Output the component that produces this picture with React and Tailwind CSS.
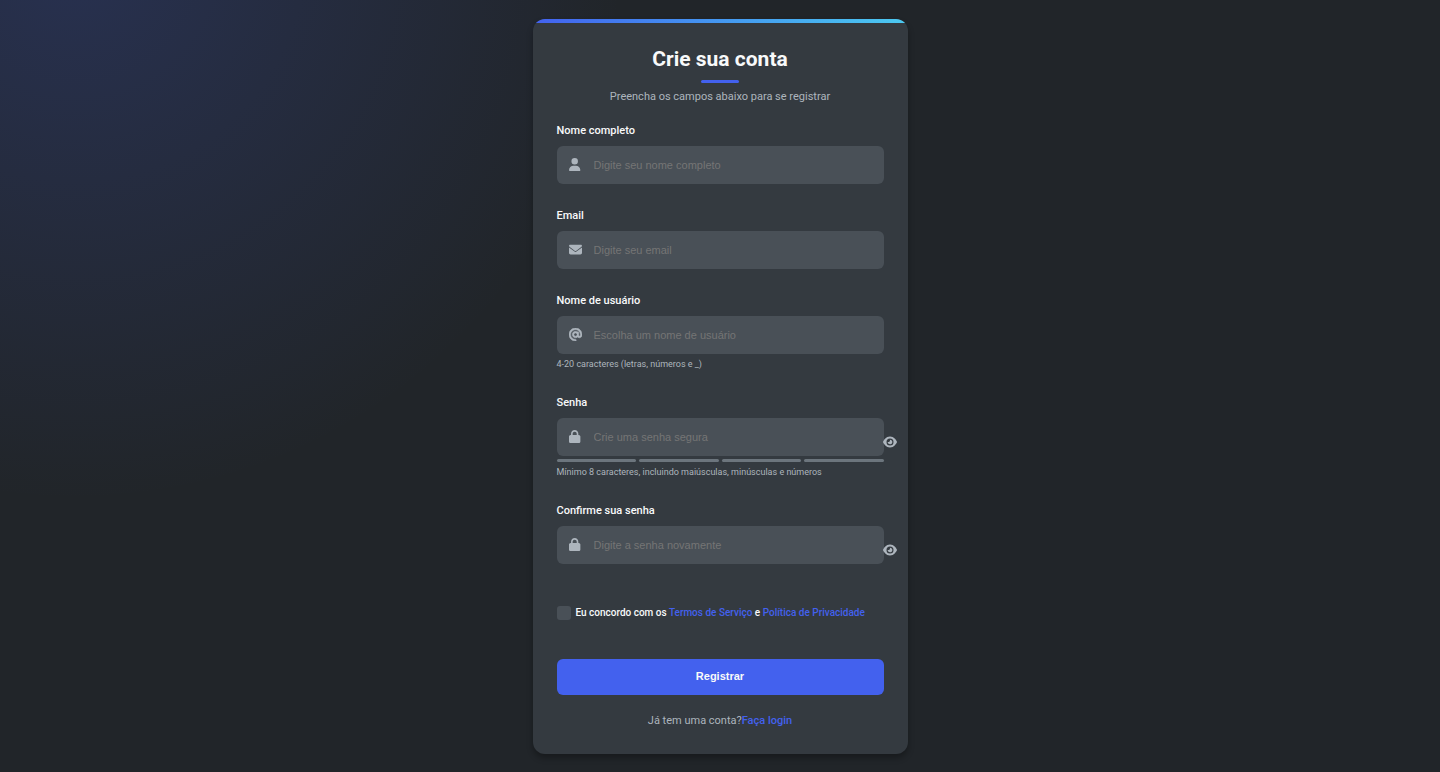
import { FaUser, FaEnvelope, FaAt, FaLock, FaEye } from "react-icons/fa6";

function BoldAt(props) {
  return <FaAt {...props} strokeWidth="20" />;
}

function Field({ id, label, icon: Icon, type = "text", placeholder, children }) {
  const isPassword = type === "password";
  return (
    <div className="flex flex-col">
      <label htmlFor={id} className="mb-[7px] text-[11px] leading-4 font-medium text-[#f8f9fa]">
        {label}
      </label>
      <div className="relative">
        <Icon
          aria-hidden="true"
          preserveAspectRatio="xMinYMid"
          className="pointer-events-none absolute top-3 left-3 size-[13px] text-[#adb5bd]"
        />
        <input
          id={id}
          type={type}
          placeholder={placeholder}
          className="block h-[38px] w-full rounded-md bg-[#495057] pr-3 pl-[37px] font-['Liberation_Sans',Arial,sans-serif] text-[11px] text-[#f8f9fa] outline-none placeholder:text-[#757575] focus:ring-2 focus:ring-[#4361ee]"
        />
        {isPassword && (
          <button type="button" aria-label="Mostrar senha" className="absolute top-[17px] -right-[13px] text-[#adb5bd]">
            <FaEye aria-hidden="true" className="size-3.5" />
          </button>
        )}
      </div>
      {children}
    </div>
  );
}

function Hint({ children }) {
  return <p className="mt-[3px] text-[9px] leading-[14px] text-[#adb5bd]">{children}</p>;
}

export default function App() {
  return (
    <main className="flex min-h-screen items-center justify-center bg-[#212529] bg-[radial-gradient(circle_550px_at_75px_-48px,rgba(67,97,238,0.2),transparent)] px-4 py-4 font-[Roboto,sans-serif]">
      <section className="relative w-full max-w-[375px] overflow-hidden rounded-xl bg-[#343a40] shadow-[0_4px_6px_rgba(0,0,0,0.3)]">
        <div className="h-1 bg-linear-to-r from-[#4361ee] to-[#4cc9f0]" />
        <div className="px-6 pt-[21px] pb-[25px]">
          <header className="mb-[18px] flex flex-col items-center">
            <h1 className="text-[21px] leading-[30px] font-bold text-[#f8f9fa]">Crie sua conta</h1>
            <span className="mt-1.5 mb-1.5 h-[3px] w-[38px] rounded-sm bg-[#4361ee]" />
            <p className="text-[11px] leading-4 text-[#adb5bd]">Preencha os campos abaixo para se registrar</p>
          </header>

          <form className="flex flex-col" onSubmit={(e) => e.preventDefault()}>
            <div className="flex flex-col gap-6">
              <Field id="nome" label="Nome completo" icon={FaUser} placeholder="Digite seu nome completo" />
              <Field id="email" label="Email" icon={FaEnvelope} type="email" placeholder="Digite seu email" />
              <Field id="usuario" label="Nome de usuário" icon={BoldAt} placeholder="Escolha um nome de usuário">
                <Hint>4-20 caracteres (letras, números e _)</Hint>
              </Field>
              <Field id="senha" label="Senha" icon={FaLock} type="password" placeholder="Crie uma senha segura">
                <div className="mt-[3px] grid grid-cols-4 gap-[3px]">
                  <span className="h-[3px] rounded-sm bg-[#6c757d]" />
                  <span className="h-[3px] rounded-sm bg-[#6c757d]" />
                  <span className="h-[3px] rounded-sm bg-[#6c757d]" />
                  <span className="h-[3px] rounded-sm bg-[#6c757d]" />
                </div>
                <Hint>Mínimo 8 caracteres, incluindo maiúsculas, minúsculas e números</Hint>
              </Field>
              <Field
                id="confirmar"
                label="Confirme sua senha"
                icon={FaLock}
                type="password"
                placeholder="Digite a senha novamente"
              />
            </div>

            <div className="mt-[41px] mb-[38px] flex items-center gap-[5px] text-[10px] leading-4 font-medium text-[#f8f9fa]">
              <input
                id="termos"
                type="checkbox"
                className="size-3.5 shrink-0 appearance-none rounded-[3px] bg-[#495057] checked:bg-[#4361ee]"
              />
              <label htmlFor="termos">
                Eu concordo com os{" "}
                <a href="#termos-de-servico" className="text-[#4361ee]">Termos de Serviço</a> e{" "}
                <a href="#privacidade" className="text-[#4361ee]">Política de Privacidade</a>
              </label>
            </div>

            <button
              type="submit"
              className="h-9 rounded-md bg-[#4361ee] font-['Liberation_Sans',Arial,sans-serif] text-[11px] font-bold text-[#f8f9fa]"
            >
              Registrar
            </button>
          </form>

          <p className="mt-[18px] text-center text-[11px] leading-4 text-[#adb5bd]">
            Já tem uma conta?
            <a href="#login" className="font-medium text-[#4361ee]">Faça login</a>
          </p>
        </div>
      </section>
    </main>
  );
}
